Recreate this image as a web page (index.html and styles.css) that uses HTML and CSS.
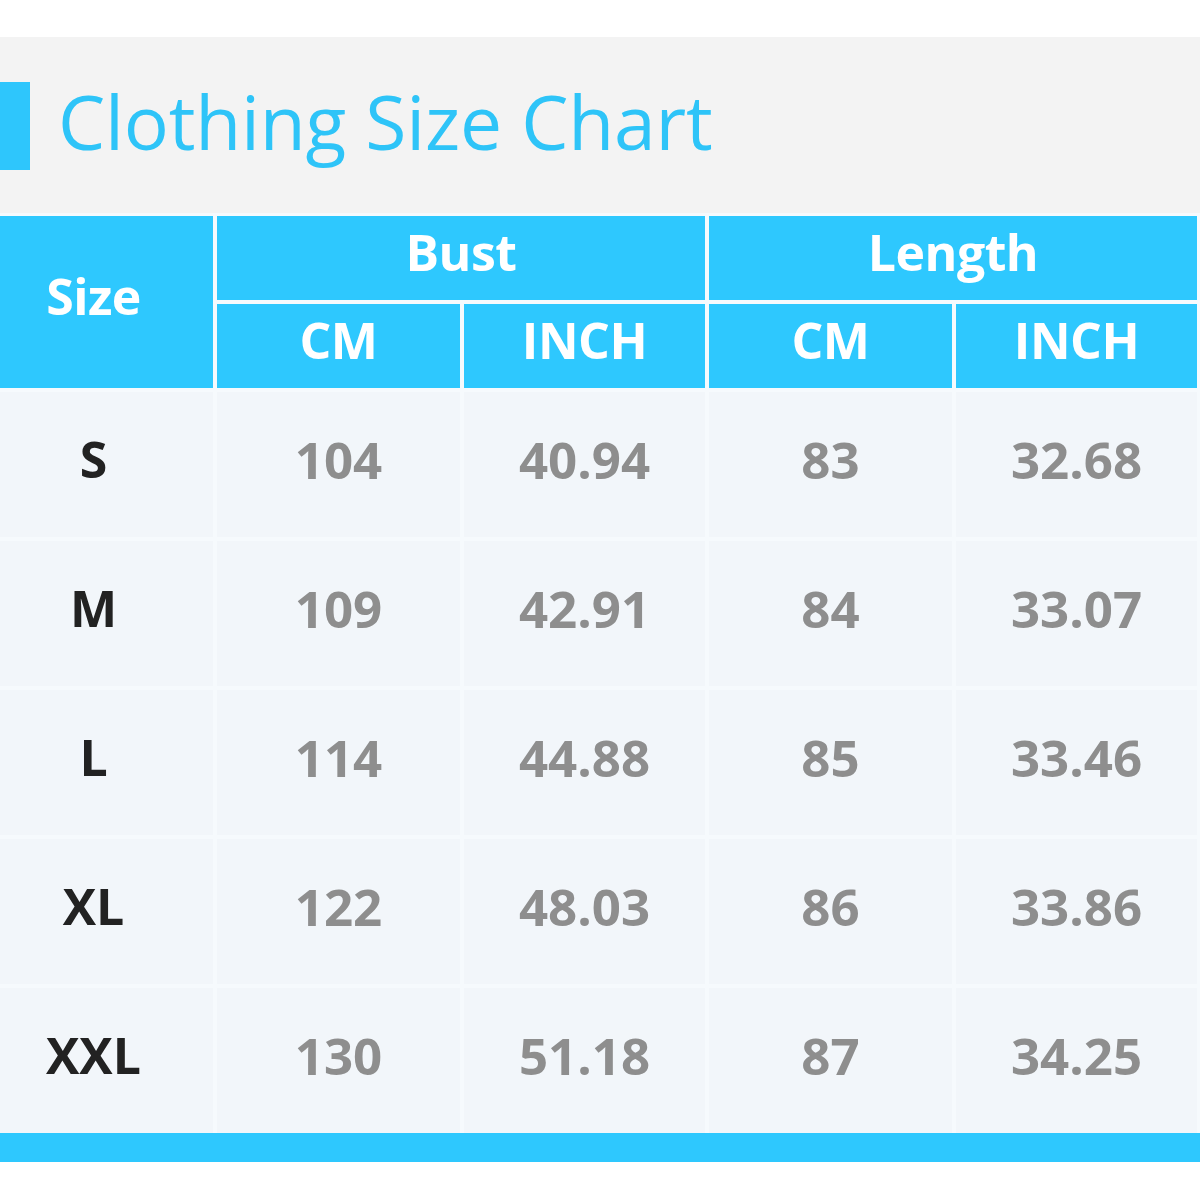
FILE: index.html
```html
<!DOCTYPE html>
<html>
<head>
<meta charset="utf-8">
<link rel="stylesheet" href="styles.css">
</head>
<body>
<div class="page">
  <div class="topgap"></div>
  <div class="band">
    <div class="mark"></div>
    <h1 class="title">Clothing Size Chart</h1>
  </div>
  <div class="chart">
    <div class="hc size">Size</div>
    <div class="hc group g1">Bust</div>
    <div class="hc group g2">Length</div>
    <div class="hc sub">CM</div>
    <div class="hc sub">INCH</div>
    <div class="hc sub">CM</div>
    <div class="hc sub">INCH</div>

    <div class="dc lab">S</div><div class="dc">104</div><div class="dc">40.94</div><div class="dc">83</div><div class="dc">32.68</div>
    <div class="dc lab">M</div><div class="dc">109</div><div class="dc">42.91</div><div class="dc">84</div><div class="dc">33.07</div>
    <div class="dc lab">L</div><div class="dc">114</div><div class="dc">44.88</div><div class="dc">85</div><div class="dc">33.46</div>
    <div class="dc lab">XL</div><div class="dc">122</div><div class="dc">48.03</div><div class="dc">86</div><div class="dc">33.86</div>
    <div class="dc lab">XXL</div><div class="dc">130</div><div class="dc">51.18</div><div class="dc">87</div><div class="dc">34.25</div>
  </div>
  <div class="footbar"></div>
</div>
</body>
</html>
```

FILE: styles.css
```css
html, body {
  margin: 0;
  padding: 0;
  background: #ffffff;
}
.page {
  width: 1200px;
  font-family: "Open Sans", "Noto Sans", sans-serif;
}
.topgap {
  height: 37px;
  background: #ffffff;
}
.band {
  height: 176px;
  background: #f3f3f3;
  display: flex;
  align-items: flex-start;
}
.mark {
  width: 30px;
  height: 88px;
  margin-top: 45px;
  background: #2ec6fc;
}
.title {
  margin: 34px 0 0 28px;
  font-size: 75px;
  font-weight: 400;
  line-height: 100px;
  color: #2ec4f8;
  letter-spacing: -0.2px;
}
.chart {
  display: grid;
  grid-template-columns: 213px 243px 241px 243px 241px;
  grid-template-rows: 84px 84px repeat(5, 145px);
  column-gap: 4px;
  row-gap: 4px;
  padding-top: 3px;
  background: #f6fafd;
  width: 1200px;
}
.hc {
  background: #2ec8fe;
  color: #ffffff;
  font-weight: 700;
  font-size: 50px;
  display: flex;
  align-items: center;
  justify-content: center;
  letter-spacing: -0.5px;
}
.size {
  grid-row: 1 / 3;
  grid-column: 1;
  padding-bottom: 12px;
  padding-right: 26px;
}
.g1 { grid-column: 2 / 4; }
.g2 { grid-column: 4 / 6; }
.group, .sub { padding-bottom: 12px; }
.dc {
  background: #f2f6fa;
  color: #8e8e8e;
  font-weight: 700;
  font-size: 51px;
  display: flex;
  align-items: center;
  justify-content: center;
  padding-bottom: 12px;
}
.lab {
  color: #222222;
  font-size: 50px;
  padding-right: 26px;
}
.footbar {
  height: 29px;
  background: #2ec8fe;
}
```
